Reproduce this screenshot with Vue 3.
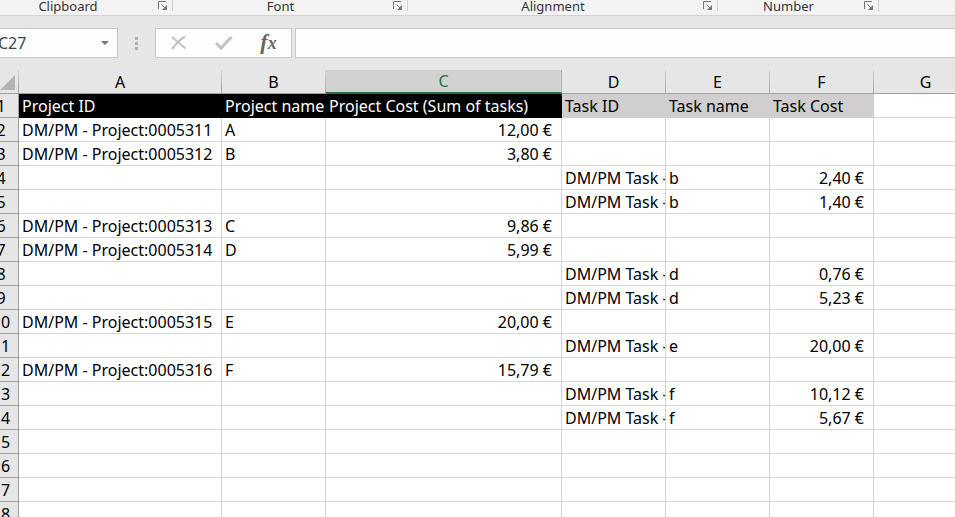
<template>
    <div class="workbook">
        <div class="ribbon">
            <div
                class="group"
                v-for="group in groups"
                :key="group.title"
                :class="group.name"
            >
                <span class="group-title">{{ group.title }}</span>
                <button class="launcher" :aria-label="`${group.title} settings`">
                    <svg width="10" height="10" viewBox="0 0 10 10">
                        <path d="M0.5 8V0.5H8" fill="none" stroke="#777" />
                        <path d="M3.5 3.5L7.5 7.5" fill="none" stroke="#777" />
                        <path d="M9 4V9H4Z" fill="#777" />
                    </svg>
                </button>
            </div>
        </div>

        <div class="formula-bar">
            <div class="name-box">
                <input v-model="activeCell" aria-label="Name box">
                <button aria-label="Show names">
                    <svg width="8" height="4" viewBox="0 0 8 4">
                        <path d="M0 0H8L4 4Z" fill="#777" />
                    </svg>
                </button>
            </div>
            <div class="grip">
                <i></i><i></i><i></i>
            </div>
            <div class="actions">
                <button aria-label="Cancel">
                    <svg width="18" height="16" viewBox="0 0 18 16">
                        <path d="M2 2L15.500 13.500M15 1.500C10 4.500 6 9 2 14" fill="none" stroke="#c3c3c3" stroke-width="2.200" />
                    </svg>
                </button>
                <button aria-label="Enter">
                    <svg width="18" height="16" viewBox="0 0 18 16">
                        <path d="M1 8L6 13L16.500 2" fill="none" stroke="#c3c3c3" stroke-width="3" />
                    </svg>
                </button>
                <button class="fx" aria-label="Insert function">f<span>x</span></button>
            </div>
            <input class="formula" v-model="formula" aria-label="Formula">
        </div>

        <table class="sheet">
            <colgroup>
                <col class="col-head">
                <col v-for="column in columns" :key="column" :class="`col-${column.toLowerCase()}`">
            </colgroup>
            <thead>
                <tr>
                    <th class="corner">
                        <svg width="15" height="15" viewBox="0 0 15 15">
                            <path d="M15 0V15H0Z" fill="#b4b4b4" />
                        </svg>
                    </th>
                    <th
                        v-for="column in columns"
                        :key="column"
                        scope="col"
                        :class="{ 'is-active': activeCell.startsWith(column) }"
                    >
                        {{ column }}
                    </th>
                </tr>
            </thead>
            <tbody>
                <tr v-for="(row, index) in rows" :key="index">
                    <th scope="row">{{ index + 1 }}</th>
                    <td
                        v-for="(column, i) in columns"
                        :key="column"
                        :class="cellClass(index, i)"
                    >
                        {{ row[i] }}
                    </td>
                </tr>
            </tbody>
        </table>
    </div>
</template>

<script setup>
import { ref } from 'vue';

const activeCell = ref('C27');
const formula = ref('');

const groups = [
    { name: 'clipboard', title: 'Clipboard' },
    { name: 'font', title: 'Font' },
    { name: 'alignment', title: 'Alignment' },
    { name: 'number', title: 'Number' },
];

const columns = ['A', 'B', 'C', 'D', 'E', 'F', 'G'];

const project = (id, name, cost) => [`DM/PM - Project:${id}`, name, cost];
const task = (name, cost) => ['', '', '', 'DM/PM Task -', name, cost];

const rows = [
    ['Project ID', 'Project name', 'Project Cost (Sum of tasks)', 'Task ID', 'Task name', 'Task Cost'],
    project('0005311', 'A', '12,00 €'),
    project('0005312', 'B', '3,80 €'),
    task('b', '2,40 €'),
    task('b', '1,40 €'),
    project('0005313', 'C', '9,86 €'),
    project('0005314', 'D', '5,99 €'),
    task('d', '0,76 €'),
    task('d', '5,23 €'),
    project('0005315', 'E', '20,00 €'),
    task('e', '20,00 €'),
    project('0005316', 'F', '15,79 €'),
    task('f', '10,12 €'),
    task('f', '5,67 €'),
    [],
    [],
    [],
    [],
];

const cellClass = (row, column) => ({
    'project-title': row === 0 && column < 3,
    'task-title': row === 0 && column > 2 && column < 6,
    'money': row > 0 && (column === 2 || column === 5),
});
</script>

<style>
body {
    background: #e6e6e6;
    overflow: hidden;
}
</style>

<style scoped>
.workbook {
    color: #000;
    font-family: "Noto Sans", sans-serif;
    font-size: 16px;
    height: 100vh;
    overflow: hidden;
}

button,
input {
    background: transparent;
    border: 0;
    color: inherit;
    font: inherit;
    margin: 0;
    outline: none;
    padding: 0;
}

/* Ribbon */
.ribbon {
    background: #f3f3f3;
    border-bottom: 1px solid #d2d2d2;
    display: flex;
    height: 15px;
    margin-left: -17px;
}

.group {
    align-items: flex-start;
    display: flex;
    flex: none;
}

.group::after {
    background: #d2d2d2;
    content: "";
    height: 11px;
    width: 1px;
}

.clipboard {
    width: 190px;
}

.font {
    width: 235px;
}

.alignment {
    width: 310px;
}

.number {
    width: 161px;
}

.group-title {
    color: #333;
    flex: 1;
    font-size: 13px;
    line-height: 12px;
    text-align: center;
}

.launcher {
    height: 10px;
    margin: 1px 4px 0 5px;
    width: 10px;
}

.launcher svg {
    display: block;
}

/* Formula bar */
.formula-bar {
    display: flex;
    height: 30px;
    padding: 12px 0;
}

.name-box,
.actions,
.formula {
    background: #fdfdfd;
    border: 1px solid #c6c6c6;
    box-sizing: border-box;
}

.name-box {
    color: #444;
    display: flex;
    margin-left: -8px;
    width: 126px;
}

.name-box input {
    flex: 1;
    min-width: 0;
    padding-left: 5px;
}

.name-box button {
    align-items: center;
    display: flex;
    justify-content: center;
    width: 24px;
}

.grip {
    display: flex;
    flex-direction: column;
    gap: 2px;
    justify-content: center;
    padding: 0 17px;
}

.grip i {
    background: #b0b0b0;
    height: 3px;
    width: 3px;
}

.actions {
    display: flex;
    width: 137px;
}

.actions button {
    align-items: center;
    display: flex;
    flex: 1;
    justify-content: center;
}

.actions .fx {
    align-items: baseline;
    color: #666;
    font-family: "Liberation Serif", serif;
    font-size: 22px;
    font-style: italic;
    font-weight: bold;
    line-height: 26px;
}

.fx span {
    font-size: 18px;
}

.formula {
    border-right: 0;
    flex: 1;
    margin-left: 3px;
    min-width: 0;
    padding: 0 8px;
}

/* Sheet */
.sheet {
    background: #fff;
    border-collapse: separate;
    border-spacing: 0;
    margin-left: -16px;
    table-layout: fixed;
    width: 994px;
}

.col-head {
    width: 35px;
}

.col-a {
    width: 203px;
}

.col-c {
    width: 236px;
}

.col-b,
.col-d,
.col-e,
.col-f,
.col-g {
    width: 104px;
}

th,
td {
    border-bottom: 1px solid #d4d4d4;
    border-right: 1px solid #d4d4d4;
    box-sizing: border-box;
    font-weight: normal;
    height: 24px;
    line-height: 22px;
    overflow: hidden;
    padding: 1px 0 0;
    white-space: nowrap;
}

th {
    background: #e6e6e6;
    border-color: #9f9f9f;
    text-align: center;
}

thead th {
    border-image: linear-gradient(#d4d4d4, #9f9f9f) 1;
}

thead th.corner {
    line-height: 0;
    padding: 0 3px 3px 0;
    text-align: right;
    vertical-align: bottom;
}

thead th.is-active {
    background: #d2d2d2;
    border-bottom: 2px solid #217346;
    border-image: none;
    border-right-color: #b0b0b0;
    color: #217346;
    line-height: 21px;
}

td {
    padding: 1px 3px 0;
}

.money {
    padding-right: 9px;
    text-align: right;
}

.project-title {
    background: #000;
    border-color: #000;
    color: #fff;
}

.task-title {
    background: #d0cece;
    border-color: #d0cece;
}
</style>
